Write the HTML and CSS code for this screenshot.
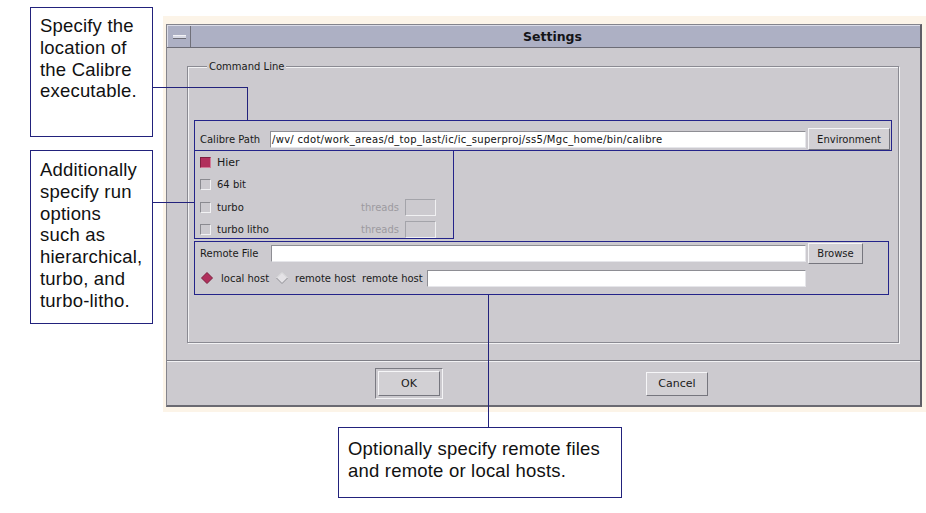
FILE: index.html
```html
<!DOCTYPE html>
<html>
<head>
<meta charset="utf-8">
<title>Settings</title>
<link rel="stylesheet" href="styles.css">
</head>
<body>
<div class="stage">
  <div class="frame">
    <div class="window">
      <div class="titlebar">
        <div class="winbtn"><span class="minglyph"></span></div>
        <div class="title">Settings</div>
      </div>
      <div class="content">
        <div class="group">
          <span class="legend">Command Line</span>
          <div class="pathbox">
            <span class="lbl path-lbl">Calibre Path</span>
            <div class="input path-input">/wv/ cdot/work_areas/d_top_last/ic/ic_superproj/ss5/Mgc_home/bin/calibre</div>
            <button class="btn env-btn">Environment</button>
          </div>
          <div class="optbox">
            <div class="optrow">
              <span class="check on"></span><span class="optlbl">Hier</span>
            </div>
            <div class="optrow">
              <span class="check"></span><span class="optlbl">64 bit</span>
            </div>
            <div class="optrow">
              <span class="check"></span><span class="optlbl">turbo</span>
              <span class="threads">threads</span><span class="input small"></span>
            </div>
            <div class="optrow">
              <span class="check"></span><span class="optlbl">turbo litho</span>
              <span class="threads">threads</span><span class="input small"></span>
            </div>
          </div>
          <div class="remotebox">
            <div class="rrow1">
              <span class="lbl remote-lbl">Remote File</span>
              <div class="input remote-input"></div>
              <button class="btn browse-btn">Browse</button>
            </div>
            <div class="rrow2">
              <svg class="radio" width="12" height="12" viewBox="0 0 12 12"><polygon points="6,0.5 11.5,6 6,11.5 0.5,6" fill="#b02f5c" stroke="#7a1f3f" stroke-width="1"/></svg>
              <span class="rlbl local-lbl">local host</span>
              <svg class="radio" width="12" height="12" viewBox="0 0 12 12"><polygon points="6,0.5 11.5,6 6,11.5 0.5,6" fill="#e4e2e6" stroke="#8c8c92" stroke-width="1"/><polyline points="0.5,6 6,0.5 11.5,6" fill="none" stroke="#ffffff" stroke-width="1"/></svg>
              <span class="rlbl rhost-lbl">remote host</span>
              <span class="rlbl rhost2-lbl">remote host</span>
              <div class="input host-input"></div>
            </div>
          </div>
        </div>
      </div>
      <div class="buttonbar">
        <div class="defframe"><button class="btn ok-btn">OK</button></div>
        <button class="btn cancel-btn">Cancel</button>
      </div>
    </div>
  </div>

  <div class="callout c1">Specify the<br>location of<br>the Calibre<br>executable.</div>
  <div class="callout c2">Additionally<br>specify run<br>options<br>such as<br>hierarchical,<br>turbo, and<br>turbo-litho.</div>
  <div class="callout c3">Optionally specify remote files<br>and remote or local hosts.</div>

  <div class="leader l1h"></div>
  <div class="leader l1v"></div>
  <div class="leader l2h"></div>
  <div class="leader l3v"></div>
</div>
</body>
</html>
```
FILE: styles.css
```css
html, body {
  margin: 0;
  padding: 0;
  background: #ffffff;
}

.stage {
  position: relative;
  width: 926px;
  height: 513px;
  overflow: hidden;
  box-sizing: border-box;
  padding: 16px 0 0 163px;
  font-family: "Liberation Sans", Arial, sans-serif;
}

.frame {
  width: 763px;
  height: 396px;
  box-sizing: border-box;
  padding: 8px 0 0 3px;
  background: #fcf4e8;
}

.window {
  width: 756px;
  height: 383px;
  box-sizing: border-box;
  border: 1px solid #84848c;
  border-right: 2px solid #5e5e66;
  border-bottom: 2px solid #6a6a72;
  background: #cccacf;
  display: flex;
  flex-direction: column;
  font-family: "DejaVu Sans", sans-serif;
  font-size: 10px;
  color: #1a1a1a;
}

.titlebar {
  height: 23px;
  box-sizing: border-box;
  background: #adb0c4;
  border-top: 1px solid #dcdde8;
  border-bottom: 1px solid #6c6c76;
  display: flex;
}

.winbtn {
  width: 24px;
  box-sizing: border-box;
  border-left: 1px solid #dcdde8;
  border-right: 1px solid #70707a;
  display: flex;
  align-items: center;
  justify-content: center;
}

.minglyph {
  display: block;
  width: 13px;
  height: 2px;
  background: #d8d9e4;
  border-bottom: 1px solid #6c6c76;
  border-top: 1px solid #f2f2f6;
}

.title {
  flex: 1;
  text-align: center;
  font-family: "DejaVu Sans", sans-serif;
  font-weight: bold;
  font-size: 12.5px;
  line-height: 21px;
  color: #141418;
  padding-right: 6px;
}

.content {
  height: 313px;
  box-sizing: border-box;
  padding: 18px 0 0 20px;
  border-bottom: 1px solid #7e7e86;
}

.group {
  width: 712px;
  height: 277px;
  box-sizing: border-box;
  border: 1px solid #8a8a92;
  box-shadow: 1px 1px 0 #f2f2f4, inset 1px 1px 0 #f2f2f4;
}

.legend {
  display: block;
  width: max-content;
  margin: -7px 0 0 19px;
  padding: 0 2px;
  line-height: 13px;
  background: #cccacf;
}

.pathbox {
  margin: 47px 0 0 6px;
  width: 698px;
  height: 31px;
  box-sizing: border-box;
  border: 1px solid #24248a;
  display: flex;
  align-items: flex-end;
  padding: 0 1px 0 5px;
}

.lbl {
  line-height: 13px;
}

.path-lbl {
  width: 70px;
  margin-bottom: 4px;
}

.input {
  box-sizing: border-box;
  background: #ffffff;
  border: 1px solid;
  border-color: #8e8e94 #e6e6ea #e6e6ea #8e8e94;
}

.path-input {
  width: 536px;
  height: 17px;
  margin-bottom: 2px;
  padding-left: 1px;
  line-height: 15px;
  white-space: nowrap;
  overflow: hidden;
  color: #111;
  letter-spacing: 0.3px;
}

.btn {
  box-sizing: border-box;
  margin: 0;
  padding: 0;
  font-family: "DejaVu Sans", sans-serif;
  font-size: 10px;
  color: #1a1a1a;
  background: #d2d0d4;
  border: 1px solid;
  border-color: #f6f6f8 #76767e #76767e #f6f6f8;
}

.env-btn {
  margin-left: 2px;
  width: 82px;
  height: 22px;
}

.optbox {
  margin-left: 6px;
  width: 260px;
  height: 88px;
  box-sizing: border-box;
  border: 1px solid #24248a;
  border-top: 0;
  padding-left: 5px;
}

.optrow {
  height: 22.5px;
  display: flex;
  align-items: center;
}

.check {
  width: 11px;
  height: 11px;
  box-sizing: border-box;
  border: 1px solid;
  border-color: #8a8a90 #f2f2f4 #f2f2f4 #8a8a90;
  background: #cccacf;
}

.check.on {
  background: #b12f5c;
  border-color: #7c2040 #d27a98 #d27a98 #7c2040;
}

.optlbl {
  margin-left: 6px;
  width: 144px;
}

.optrow:first-child .optlbl {
  font-size: 11px;
}

.threads {
  width: 44px;
  color: #9c9aa0;
}

.input.small {
  width: 31px;
  height: 17px;
  background: #cccacf;
  border-color: #a4a4aa #f0f0f2 #f0f0f2 #a4a4aa;
}

.remotebox {
  margin: 2px 0 0 6px;
  width: 695px;
  height: 54px;
  box-sizing: border-box;
  border: 1px solid #24248a;
  padding-left: 5px;
}

.rrow1 {
  height: 22px;
  display: flex;
  align-items: center;
}

.remote-lbl {
  width: 71px;
}

.remote-input {
  width: 535px;
  height: 17px;
}

.browse-btn {
  margin-left: 2px;
  width: 55px;
  height: 21px;
}

.rrow2 {
  margin-top: 4px;
  height: 20px;
  display: flex;
  align-items: center;
  padding-left: 1px;
}

.radio {
  display: block;
  flex: none;
}

.local-lbl {
  margin-left: 8px;
  width: 55px;
}

.rhost-lbl {
  margin-left: 7px;
  width: 67px;
}

.rhost2-lbl {
  width: 65px;
}

.host-input {
  width: 379px;
  height: 17px;
}

.buttonbar {
  flex: 1;
  border-top: 1px solid #f2f2f4;
  display: flex;
  align-items: center;
  padding-left: 208px;
}

.defframe {
  width: 68px;
  height: 31px;
  box-sizing: border-box;
  border: 1px solid;
  border-color: #7a7a82 #f4f4f6 #f4f4f6 #7a7a82;
  padding: 2px;
  display: flex;
}

.ok-btn {
  flex: 1;
  font-size: 11px;
}

.cancel-btn {
  margin-left: 203px;
  width: 62px;
  height: 24px;
  font-size: 11px;
}

.callout {
  position: absolute;
  box-sizing: border-box;
  border: 1px solid #22227c;
  background: #ffffff;
  font-family: "Liberation Sans", Arial, sans-serif;
  font-size: 18.5px;
  line-height: 21.8px;
  color: #111111;
  letter-spacing: 0.2px;
}

.c1 {
  left: 30px;
  top: 7px;
  width: 123px;
  height: 130px;
  padding: 7px 0 0 9px;
}

.c2 {
  left: 30px;
  top: 150px;
  width: 123px;
  height: 174px;
  padding: 8px 0 0 9px;
}

.c3 {
  left: 338px;
  top: 427px;
  width: 284px;
  height: 71px;
  padding: 10px 0 0 9px;
}

.leader {
  position: absolute;
  background: #22227c;
}

.l1h { left: 152px; top: 87px; width: 96px; height: 1px; }
.l1v { left: 247px; top: 87px; width: 1px; height: 33px; }
.l2h { left: 152px; top: 202px; width: 42px; height: 1px; }
.l3v { left: 488px; top: 295px; width: 1px; height: 132px; }
```
